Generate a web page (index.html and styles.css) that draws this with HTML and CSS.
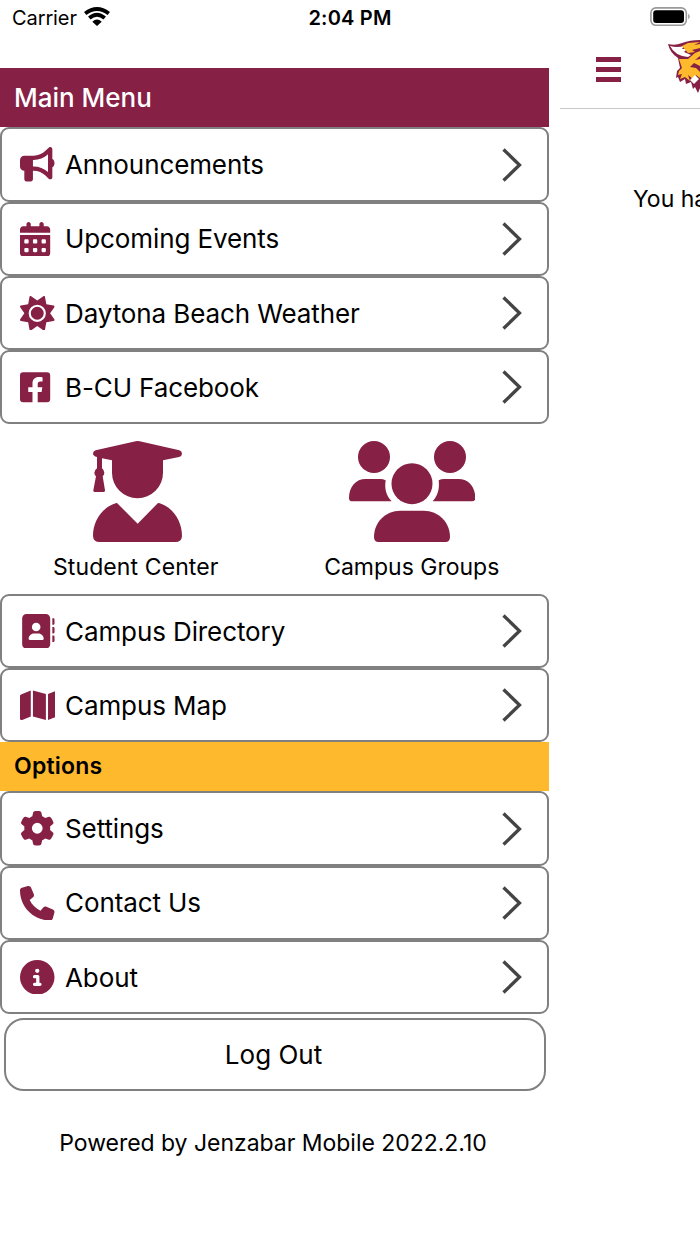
FILE: index.html
```html
<!DOCTYPE html>
<html lang="en">
<head>
<title>Main Menu</title>
<meta charset="UTF-8">
<meta name="viewport" content="width=device-width, initial-scale=1.0">
<link rel="stylesheet" href="styles.css">
</head>
<body>
<div class="statusbar">
    <div class="carrier">
        <span>Carrier</span>
        <svg class="wifi" viewBox="0 0 26 19">
            <path d="M1.2 6.600Q13-2.600 24.800 6.600M5.300 11Q13 4.400 20.700 11" fill="none" stroke="#000" stroke-width="3.800"/>
            <path d="M8.300 14.700Q13 10.400 17.700 14.700L13 19Z"/>
        </svg>
    </div>
    <div class="time">2:04 PM</div>
    <svg class="battery" viewBox="0 0 41 20">
        <rect x=".9" y=".9" width="35.4" height="17.4" rx="5" fill="none" stroke="#999" stroke-width="1.6"/>
        <rect x="3.2" y="3.2" width="30.8" height="12.8" rx="3"/>
        <path d="M38.3 6.5Q41 9.5 38.3 12.5Z" fill="#888"/>
    </svg>
</div>
<div class="panels">
    <nav class="drawer">
        <h1 class="title">Main Menu</h1>
        <a class="item">
            <svg class="icon" viewBox="0 0 512 512"><path d="M480 32c0-12.9-7.8-24.6-19.8-29.6s-25.7-2.2-34.9 6.9L381.7 53c-48 48-113.1 75-181 75H192 160 64c-35.3 0-64 28.7-64 64v96c0 35.3 28.7 64 64 64l0 128c0 17.7 14.3 32 32 32h64c17.7 0 32-14.3 32-32V352l8.7 0c67.9 0 133 27 181 75l43.6 43.6c9.2 9.2 22.9 11.9 34.9 6.9s19.8-16.6 19.8-29.6V300.4c18.6-8.8 32-32.5 32-60.4s-13.4-51.6-32-60.4V32zm-64 76.7V240 371.3C357.2 317.8 280.5 288 200.7 288H192V192h8.7c79.8 0 156.5-29.8 215.3-83.3z"/></svg>
            <span>Announcements</span>
            <svg class="chevron" viewBox="0 0 20 36"><path d="M1.5 2.5 17.5 18 1.5 33.5"/></svg>
        </a>
        <a class="item">
            <svg class="icon" viewBox="0 0 512 512"><path d="M128 0c17.7 0 32 14.3 32 32V64H288V32c0-17.7 14.3-32 32-32s32 14.3 32 32V64h48c26.5 0 48 21.5 48 48v48H0V112C0 85.5 21.5 64 48 64H96V32c0-17.7 14.3-32 32-32zM0 192H448V464c0 26.5-21.5 48-48 48H48c-26.5 0-48-21.5-48-48V192zm64 80v32c0 8.8 7.2 16 16 16h32c8.8 0 16-7.2 16-16V272c0-8.8-7.2-16-16-16H80c-8.8 0-16 7.2-16 16zm128 0v32c0 8.8 7.2 16 16 16h32c8.8 0 16-7.2 16-16V272c0-8.8-7.2-16-16-16H208c-8.8 0-16 7.2-16 16zm144-16c-8.8 0-16 7.2-16 16v32c0 8.8 7.2 16 16 16h32c8.8 0 16-7.2 16-16V272c0-8.8-7.2-16-16-16H336zM64 400v32c0 8.8 7.2 16 16 16h32c8.8 0 16-7.2 16-16V400c0-8.8-7.2-16-16-16H80c-8.8 0-16 7.2-16 16zm144-16c-8.8 0-16 7.2-16 16v32c0 8.8 7.2 16 16 16h32c8.8 0 16-7.2 16-16V400c0-8.8-7.2-16-16-16H208zm112 16v32c0 8.8 7.2 16 16 16h32c8.8 0 16-7.2 16-16V400c0-8.8-7.2-16-16-16H336c-8.8 0-16 7.2-16 16z"/></svg>
            <span>Upcoming Events</span>
            <svg class="chevron" viewBox="0 0 20 36"><path d="M1.5 2.5 17.5 18 1.5 33.5"/></svg>
        </a>
        <a class="item">
            <svg class="icon" viewBox="0 0 512 512"><path d="M361.5 1.2c5 2.1 8.6 6.6 9.6 11.9L391 121l107.9 19.8c5.3 1 9.8 4.6 11.9 9.6s1.5 10.7-1.6 15.2L446.9 256l62.3 90.3c3.1 4.5 3.7 10.2 1.6 15.2s-6.6 8.6-11.9 9.6L391 391 371.1 498.9c-1 5.3-4.6 9.8-9.6 11.9s-10.7 1.5-15.2-1.6L256 446.9l-90.3 62.3c-4.5 3.1-10.2 3.7-15.2 1.6s-8.6-6.6-9.6-11.9L121 391 13.1 371.1c-5.3-1-9.8-4.6-11.9-9.6s-1.5-10.7 1.6-15.2L65.1 256 2.8 165.7c-3.1-4.5-3.7-10.2-1.6-15.2s6.6-8.6 11.9-9.6L121 121 140.9 13.1c1-5.3 4.6-9.8 9.6-11.9s10.7-1.5 15.2 1.6L256 65.1 346.3 2.8c4.5-3.1 10.2-3.7 15.2-1.6zM160 256a96 96 0 1 1 192 0 96 96 0 1 1 -192 0zm224 0a128 128 0 1 0 -256 0 128 128 0 1 0 256 0z" fill-rule="evenodd"/></svg>
            <span>Daytona Beach Weather</span>
            <svg class="chevron" viewBox="0 0 20 36"><path d="M1.5 2.5 17.5 18 1.5 33.5"/></svg>
        </a>
        <a class="item">
            <svg class="icon" viewBox="0 0 512 512"><path d="M400 32H48A48 48 0 0 0 0 80v352a48 48 0 0 0 48 48h137.25V327.69h-63V256h63v-54.64c0-62.15 37-96.48 93.67-96.48 27.14 0 55.52 4.84 55.52 4.84v61h-31.27c-30.81 0-40.42 19.12-40.42 38.73V256h68.78l-11 71.69h-57.78V480H400a48 48 0 0 0 48-48V80a48 48 0 0 0-48-48z"/></svg>
            <span>B-CU Facebook</span>
            <svg class="chevron" viewBox="0 0 20 36"><path d="M1.5 2.5 17.5 18 1.5 33.5"/></svg>
        </a>
        <div class="tiles">
            <a class="tile">
                <svg class="tile-icon" viewBox="98 36 267 303">
                    <path d="M226 37Q232 35 238 37L357 64Q365 67 365 74 365 81 356 84L308 94V131A76.500 76.500 0 0 1 155 131V94L125 88V118Q132 124 132 131 132 137 127 142L134 184Q135 189 130 189H104Q98 189 99 184L107 142Q102 137 102 131 102 124 110 118V84Q98 80 98 74 98 67 106 64Z"/>
                    <path d="M166 223Q170 221 173 225L232 284 290 225Q294 221 298 223C340 237 365 277 365 321Q364 339 345 339H118Q99 339 98 321C98 277 123 237 166 223Z"/>
                </svg>
                <span>Student Center</span>
            </a>
            <a class="tile">
                <svg class="tile-icon" viewBox="87 36 379 303">
                    <circle cx="162" cy="84" r="48"/>
                    <circle cx="390" cy="84" r="48"/>
                    <circle cx="276" cy="164" r="61.500"/>
                    <path d="M137 150H181Q189 150 197 154C193 178 198 200 215 217H97Q87 217 87 207C87 173 108 150 137 150Z"/>
                    <path d="M416 150H372Q364 150 356 154C359 178 354 200 338 217H456Q466 217 466 207C466 173 445 150 416 150Z"/>
                    <path d="M241 245H311C356 245 390 280 390 324Q390 339 376 339H176Q162 339 162 324C162 280 196 245 241 245Z"/>
                </svg>
                <span>Campus Groups</span>
            </a>
        </div>
        <a class="item">
            <svg class="icon" viewBox="0 0 512 512"><path d="M96 0C60.7 0 32 28.7 32 64V448c0 35.3 28.7 64 64 64H384c35.3 0 64-28.7 64-64V64c0-35.3-28.7-64-64-64H96zM208 288h64c44.2 0 80 35.8 80 80c0 8.8-7.2 16-16 16H144c-8.8 0-16-7.2-16-16c0-44.2 35.8-80 80-80zm-32-96a64 64 0 1 1 128 0 64 64 0 1 1 -128 0zM480 64h16q16 0 16 16v64q0 16-16 16h-16zM480 192h16q16 0 16 16v64q0 16-16 16h-16zM480 320h16q16 0 16 16v64q0 16-16 16h-16z" fill-rule="evenodd"/></svg>
            <span>Campus Directory</span>
            <svg class="chevron" viewBox="0 0 20 36"><path d="M1.5 2.5 17.5 18 1.5 33.5"/></svg>
        </a>
        <a class="item">
            <svg class="icon" viewBox="0 0 512 512"><path d="M384 476.1L192 421.2V35.9L384 90.8V476.1zm32-1.2V88.4L543.1 37.5c15.8-6.3 32.9 5.3 32.9 22.3V394.6c0 9.8-6 18.6-15.1 22.3L416 474.8zM15.1 95.1L160 37.2V423.6L32.9 474.5C17.1 480.8 0 469.2 0 452.2V117.4c0-9.8 6-18.6 15.1-22.3z"/></svg>
            <span>Campus Map</span>
            <svg class="chevron" viewBox="0 0 20 36"><path d="M1.5 2.5 17.5 18 1.5 33.5"/></svg>
        </a>
        <h2 class="subtitle">Options</h2>
        <a class="item">
            <svg class="icon" viewBox="0 0 512 512"><path d="M495.9 166.6c3.2 8.7 .5 18.4-6.4 24.6l-43.3 39.4c1.1 8.3 1.7 16.8 1.7 25.4s-.6 17.1-1.7 25.4l43.3 39.4c6.9 6.2 9.6 15.9 6.4 24.6c-4.4 11.9-9.7 23.3-15.8 34.3l-4.7 8.1c-6.6 11-14 21.4-22.1 31.2c-5.9 7.2-15.7 9.6-24.5 6.8l-55.7-17.7c-13.4 10.3-28.2 18.9-44 25.4l-12.5 57.1c-2 9.1-9 16.3-18.2 17.8c-13.8 2.3-28 3.5-42.5 3.5s-28.7-1.2-42.5-3.5c-9.2-1.5-16.2-8.7-18.2-17.8l-12.5-57.1c-15.8-6.5-30.6-15.1-44-25.4L83.1 425.9c-8.8 2.8-18.6 .3-24.5-6.8c-8.1-9.8-15.5-20.2-22.1-31.2l-4.7-8.1c-6.1-11-11.4-22.4-15.8-34.3c-3.2-8.7-.5-18.4 6.4-24.6l43.3-39.4C64.6 273.1 64 264.6 64 256s.6-17.1 1.7-25.4L22.4 191.2c-6.9-6.2-9.6-15.9-6.4-24.6c4.4-11.9 9.7-23.3 15.8-34.3l4.7-8.1c6.6-11 14-21.4 22.1-31.2c5.9-7.2 15.7-9.6 24.5-6.8l55.7 17.7c13.4-10.3 28.2-18.9 44-25.4l12.5-57.1c2-9.1 9-16.3 18.2-17.8C227.3 1.2 241.5 0 256 0s28.7 1.2 42.5 3.5c9.2 1.5 16.2 8.7 18.2 17.8l12.5 57.1c15.8 6.5 30.6 15.1 44 25.4l55.7-17.7c8.8-2.8 18.6-.3 24.5 6.8c8.1 9.8 15.5 20.2 22.1 31.2l4.7 8.1c6.1 11 11.4 22.4 15.8 34.3zM256 336a80 80 0 1 0 0-160 80 80 0 1 0 0 160z"/></svg>
            <span>Settings</span>
            <svg class="chevron" viewBox="0 0 20 36"><path d="M1.5 2.5 17.5 18 1.5 33.5"/></svg>
        </a>
        <a class="item">
            <svg class="icon" viewBox="0 0 512 512"><path d="M164.9 24.6c-7.7-18.6-28-28.5-47.4-23.2l-88 24C12.1 30.2 0 46 0 64C0 311.4 200.6 512 448 512c18 0 33.8-12.1 38.6-29.5l24-88c5.3-19.4-4.6-39.7-23.2-47.4l-96-40c-16.3-6.8-35.2-2.1-46.3 11.6L304.7 368C234.3 334.7 177.3 277.7 144 207.3L193.3 167c13.7-11.2 18.4-30 11.6-46.3l-40-96z"/></svg>
            <span>Contact Us</span>
            <svg class="chevron" viewBox="0 0 20 36"><path d="M1.5 2.5 17.5 18 1.5 33.5"/></svg>
        </a>
        <a class="item">
            <svg class="icon" viewBox="0 0 512 512"><path d="M256 512A256 256 0 1 0 256 0a256 256 0 1 0 0 512zM216 336h24V272H216c-13.3 0-24-10.7-24-24s10.7-24 24-24h48c13.3 0 24 10.7 24 24v88h8c13.3 0 24 10.7 24 24s-10.7 24-24 24H216c-13.3 0-24-10.7-24-24s10.7-24 24-24zm40-208a32 32 0 1 1 0 64 32 32 0 1 1 0-64z" fill-rule="evenodd"/></svg>
            <span>About</span>
            <svg class="chevron" viewBox="0 0 20 36"><path d="M1.5 2.5 17.5 18 1.5 33.5"/></svg>
        </a>
        <button class="logout">Log Out</button>
        <p class="powered">Powered by Jenzabar Mobile 2022.2.10</p>
    </nav>
    <main class="content">
        <header class="topbar">
            <div class="burger"><i></i><i></i><i></i></div>
            <svg class="logo" viewBox="0 0 32 54">
                <path d="M0 4Q7 6 14 3 22 0 32 0V48L30 53 27 47 25 49 23 42 18 44 17 39 12 42 10 37 8 38 9 31 12 28 10 18Q2 13 0 4Z" fill="#862045"/>
                <path d="M2 6Q9 8 16 6L14 9 19 9 16 12 23 15 20 17Q7 16 2 6Z" fill="#fff"/>
                <path d="M14 6 20 3 32 2 26 5 32 4V8L24 10 27 12 20 13ZM11 19 20 19 27 13 32 11V16L27 20 32 19V26L26 23 22 27 28 28 32 32V38L28 35 25 39 20 35 22 41 17 37 12 39 14 34 10 35 11 31 14 28Z" fill="#ffb92c"/>
                <path d="M22 40 27 35 31 39 26 44Z" fill="#fff"/>
            </svg>
        </header>
        <p class="message">You have</p>
    </main>
</div>
</body>
</html>
```
FILE: styles.css
```css
* {
    box-sizing: border-box;
}

body {
    margin: 0;
    height: 1244px;
    overflow: hidden;
    background-color: #fff;
    color: #000;
    font-family: Inter, "Liberation Sans", sans-serif;
}

h1, h2, p {
    margin: 0;
}

.statusbar {
    height: 36px;
    display: grid;
    grid-template-columns: 1fr auto 1fr;
    align-items: center;
    padding: 0 9px 1px 12px;
    font-size: 20px;
}

.carrier {
    display: flex;
    align-items: center;
    gap: 7px;
    letter-spacing: -0.1px;
}

.wifi {
    width: 26px;
    height: 19px;
    margin-top: -2px;
}

.time {
    font-weight: 600;
    letter-spacing: 0.2px;
    margin-right: 3px;
}

.battery {
    width: 41px;
    height: 20px;
    justify-self: end;
    margin-top: -1px;
}

.panels {
    display: flex;
    gap: 11px;
}

.drawer {
    width: 549px;
    flex: none;
    padding-top: 32px;
}

.title {
    height: 59.4px;
    line-height: 60px;
    padding-left: 14px;
    background-color: #862045;
    color: #fff;
    font-size: 26px;
    font-weight: 500;
}

.item {
    height: 74.25px;
    display: flex;
    align-items: center;
    padding: 0 25px 0 18px;
    border: 2px solid #808080;
    border-radius: 9px;
    font-size: 26px;
    letter-spacing: -0.1px;
}

.item span {
    flex: 1;
    margin-left: 10.5px;
}

.icon {
    width: 34.5px;
    height: 34.5px;
    fill: #862045;
}

.chevron {
    width: 20px;
    height: 36px;
    fill: none;
    stroke: #444;
    stroke-width: 3.3;
}

.tiles {
    height: 169.5px;
    display: flex;
    padding-top: 17px;
}

.tile {
    flex: 1;
    display: flex;
    flex-direction: column;
    align-items: center;
    font-size: 23px;
    line-height: 28px;
    gap: 11px;
}

.tile-icon {
    height: 101px;
    fill: #862045;
}

.tile:first-child span {
    letter-spacing: 0.1px;
    margin-right: 3px;
}

.subtitle {
    height: 49px;
    line-height: 49px;
    padding-left: 14px;
    background-color: #ffb92c;
    font-size: 23px;
    font-weight: 600;
    letter-spacing: 0.2px;
}

.logout {
    display: block;
    width: 542px;
    height: 73px;
    margin: 4px 0 0 4px;
    padding: 0 3px 0 0;
    border: 2px solid #808080;
    border-radius: 20px;
    background-color: #fff;
    color: #000;
    font-family: inherit;
    font-size: 26px;
}

.powered {
    margin-top: 37.5px;
    padding-right: 3px;
    text-align: center;
    font-size: 23px;
    line-height: 28px;
    letter-spacing: -0.03px;
}

.content {
    flex: 1;
    min-width: 0;
    overflow: hidden;
}

.topbar {
    height: 73px;
    display: flex;
    justify-content: space-between;
    padding: 4px 0 0 36px;
    border-bottom: 1px solid #c8c8c8;
}

.burger {
    display: flex;
    flex-direction: column;
    gap: 5px;
    padding-top: 17px;
}

.burger i {
    width: 25px;
    height: 5px;
    background-color: #862045;
}

.logo {
    width: 32px;
    height: 54px;
}

.message {
    margin: 75px 0 0 73px;
    font-size: 23px;
    line-height: 30px;
    white-space: nowrap;
}
```
